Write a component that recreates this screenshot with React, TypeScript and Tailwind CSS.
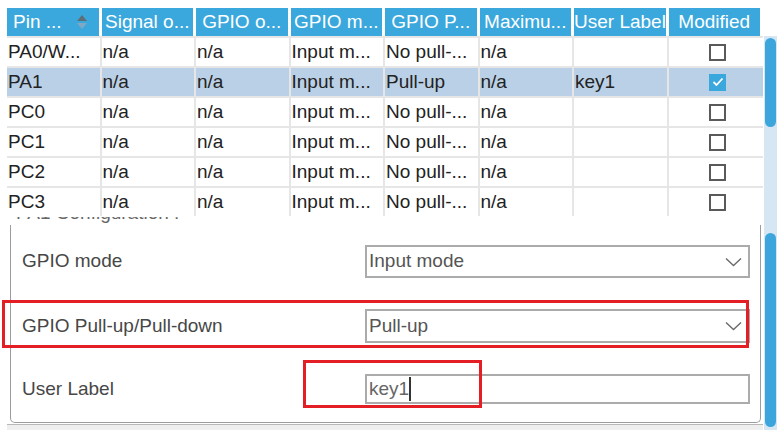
const headers = ["Pin ...", "Signal o...", "GPIO o...", "GPIO m...", "GPIO P...", "Maximu...", "User Label", "Modified"];

const rows = [
  { pin: "PA0/W...", pull: "No pull-...", label: "", checked: false, selected: false },
  { pin: "PA1", pull: "Pull-up", label: "key1", checked: true, selected: true },
  { pin: "PC0", pull: "No pull-...", label: "", checked: false, selected: false },
  { pin: "PC1", pull: "No pull-...", label: "", checked: false, selected: false },
  { pin: "PC2", pull: "No pull-...", label: "", checked: false, selected: false },
  { pin: "PC3", pull: "No pull-...", label: "", checked: false, selected: false },
];

function Chevron() {
  return (
    <svg width="17" height="10" viewBox="0 0 17 10" fill="none">
      <path d="M1 1.5 L8.5 8.5 L16 1.5" stroke="#6b6b6b" strokeWidth="1.4" />
    </svg>
  );
}

function Checkbox({ checked }: { checked: boolean }) {
  if (checked) {
    return (
      <div className="w-[17px] h-[17px] bg-[#3aa8dd] flex items-center justify-center">
        <svg width="12" height="10" viewBox="0 0 12 10" fill="none">
          <path d="M1.5 5 L4.5 8 L10.5 1.5" stroke="#fff" strokeWidth="1.8" />
        </svg>
      </div>
    );
  }
  return <div className="w-[17px] h-[17px] border-2 border-[#5a5a5a] bg-white" />;
}

function Cell({ children, last }: { children?: React.ReactNode; last?: boolean }) {
  return (
    <div className={`pl-[1px] overflow-hidden whitespace-nowrap ${last ? "" : "border-r-2 border-[#e6e6e6]"}`}>
      {children}
    </div>
  );
}

export default function App() {
  return (
    <div className="w-[778px] h-[430px] bg-white relative overflow-hidden font-['Liberation_Sans',Arial,sans-serif] text-[19px]">
      {/* pin table */}
      <div className="flex h-[217px]">
        <div className="w-[763px] pl-[7px] pt-[8px] overflow-hidden">
          <div className="grid grid-cols-[repeat(8,91.5px)] gap-x-[3px] h-[28px]">
            {headers.map((h, i) =>
              i === 0 ? (
                <div key={h} className="bg-[#3aa8dd] text-white flex items-center pl-[6px] leading-[28px] whitespace-nowrap">
                  <span>{h}</span>
                  <span className="ml-auto mr-[12px] flex flex-col gap-[2px]">
                    <span className="w-0 h-0 border-x-[5.5px] border-x-transparent border-b-[6px] border-b-[#5e6e79]" />
                    <span className="w-0 h-0 border-x-[5.5px] border-x-transparent border-t-[6px] border-t-[#7fa8c2]" />
                  </span>
                </div>
              ) : (
                <div key={h} className="bg-[#3aa8dd] text-white text-center leading-[28px] whitespace-nowrap overflow-hidden">
                  {h}
                </div>
              )
            )}
          </div>
          {rows.map((r) => (
            <div
              key={r.pin}
              className={`grid grid-cols-[repeat(8,94.5px)] h-[30px] border-t-2 border-[#e6e6e6] leading-[28px] text-[#222] ${r.selected ? "bg-[#bad0e6]" : ""}`}
            >
              <Cell>{r.pin}</Cell>
              <Cell>n/a</Cell>
              <Cell>n/a</Cell>
              <Cell>Input m...</Cell>
              <Cell>{r.pull}</Cell>
              <Cell>n/a</Cell>
              <Cell>{r.label}</Cell>
              <div className="flex items-center justify-center pl-[4px]">
                <Checkbox checked={r.checked} />
              </div>
            </div>
          ))}
        </div>
        <div className="w-[15px] px-[1px] pt-[36px]">
          <div className="h-full bg-[#d6e6f3] px-[1px] pt-[2px]">
            <div className="h-[89px] rounded-full bg-[#3ca6dc]" />
          </div>
        </div>
      </div>

      {/* configuration panel, scrolled so the legend is mostly hidden */}
      <div className="flex h-[213px]">
        <div className="w-[763px] overflow-hidden flex flex-col">
          <div className="h-[8px] overflow-hidden pl-[16px] text-[#666] whitespace-nowrap">
            <div className="mt-[-15px] leading-[22px]">PA1 Configuration :</div>
          </div>
          <div className="ml-[10px] w-[751px] h-[198px] border-x border-b border-[#9c9c9c] rounded-b-[5px] pt-[20px] pl-[11px] pr-[10px] text-[#474747]">
            <div className="flex items-center h-[33px]">
              <div className="w-[343px]">GPIO mode</div>
              <div className="flex-1 h-full border-2 border-[#ababab] flex items-center pl-[2px] pr-[6px] text-[#555]">
                <span>Input mode</span>
                <span className="ml-auto">
                  <Chevron />
                </span>
              </div>
            </div>
            <div className="flex items-center h-[34px] mt-[31px]">
              <div className="w-[343px]">GPIO Pull-up/Pull-down</div>
              <div className="flex-1 h-full border-2 border-[#ababab] flex items-center pl-[2px] pr-[6px] text-[#555]">
                <span>Pull-up</span>
                <span className="ml-auto">
                  <Chevron />
                </span>
              </div>
            </div>
            <div className="flex items-center h-[30px] mt-[31px]">
              <div className="w-[343px]">User Label</div>
              <div className="flex-1 h-full border-2 border-[#ababab] flex items-center pl-[2px] text-[#666]">
                <span>key1</span>
                <span className="w-[1.5px] h-[24px] bg-[#333]" />
              </div>
            </div>
          </div>
          <div className="ml-[7px] mt-[1px] flex-1 border-t border-[#b8b8b8] bg-[#efefef]" />
        </div>
        <div className="w-[15px] px-[1px]">
          <div className="h-full bg-[#d6e6f3] px-[1px] pt-[16px]">
            <div className="h-[194px] rounded-full bg-[#3ca6dc]" />
          </div>
        </div>
      </div>

      {/* red annotation boxes */}
      <div className="absolute left-[2px] top-[300px] w-[747px] h-[48px] border-[3px] border-[#e31e24]" />
      <div className="absolute left-[303px] top-[360px] w-[179px] h-[48px] border-[3px] border-[#e31e24]" />
    </div>
  );
}
